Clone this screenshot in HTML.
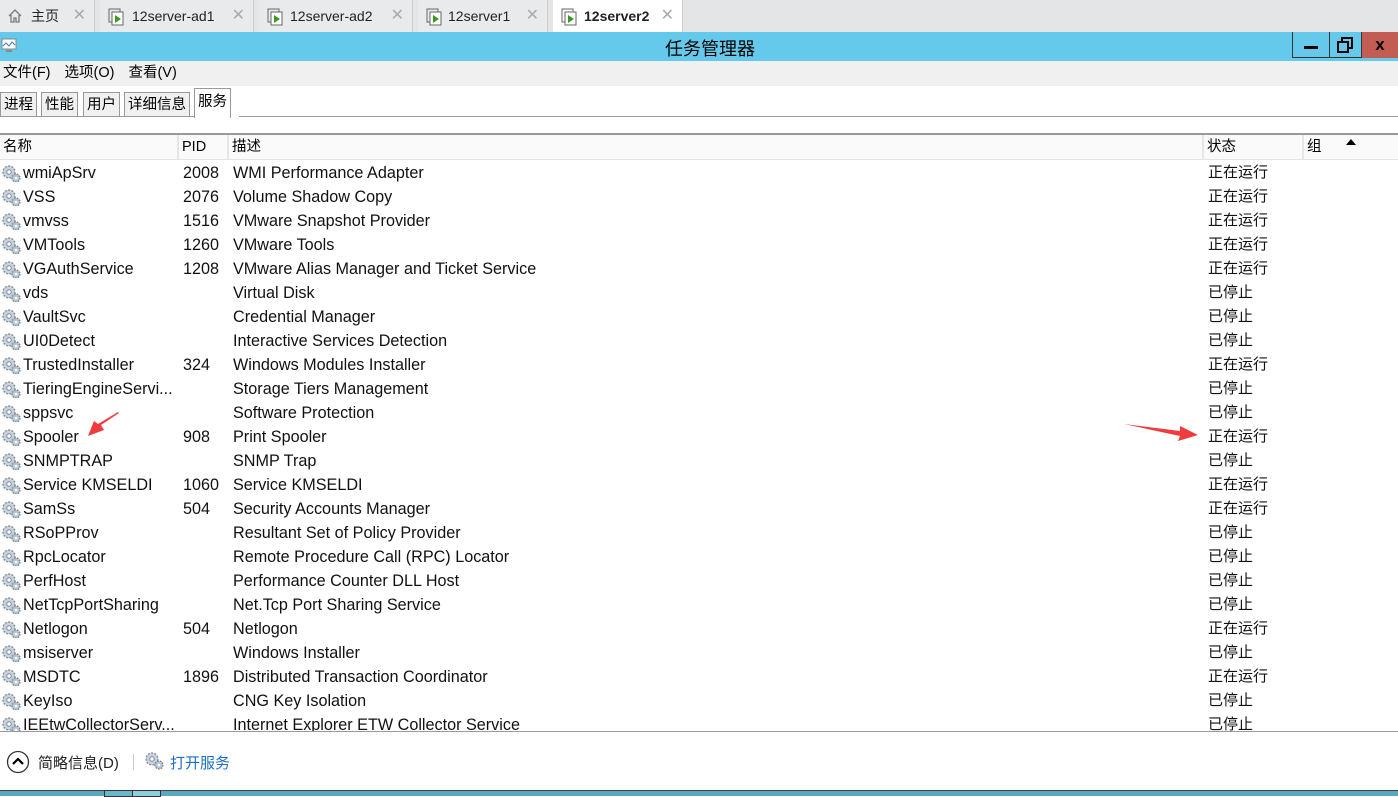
<!DOCTYPE html><html><head><meta charset="utf-8"><style>
body{margin:0;width:1398px;height:795px;overflow:hidden;background:#fff;font-family:"Liberation Sans","Noto Sans CJK SC",sans-serif;position:relative;color:#000}
.abs{position:absolute}
.tabs{left:0;top:0;width:1398px;height:32px;background:#e4e5e7}
.tab{position:absolute;top:0;height:32px;background:#e9eaec;border-right:1px solid #ccc;font-size:14px;line-height:32px;color:#222}
.tab .x{position:absolute;right:8px;top:0;color:#aaa;font-size:16px}
.title{left:0;top:32px;width:1398px;height:29px;background:#64c9ea}
.menu{left:0;top:61px;width:1398px;height:25px;background:#f0f0f0;font-size:14.5px;line-height:25px}
.ttab{position:absolute;top:92px;height:24px;border:1px solid #999;border-bottom:none;background:#f0f0f0;font-size:14.5px;line-height:24px;padding:0 3px}
.row{position:absolute;left:0;width:1398px;height:24px;font-size:16.2px;line-height:24px;color:#111}
.row span{position:absolute;top:1px;white-space:nowrap}
.row span.st{font-size:15px;top:1px}
.g{left:1px;top:4px;width:20px;height:18px}
.hdr{position:absolute;top:135px;height:24px;font-size:14.5px;line-height:24px;background:#fafafa;border-right:2px solid #e6e6e6;padding-left:3px;box-sizing:border-box}
</style></head><body>
<svg width="0" height="0" style="position:absolute"><defs><g id="gear"><circle cx="8" cy="8" r="6" fill="#c7d1dc" stroke="#7d8a99" stroke-width="1.3" stroke-dasharray="2 1.4"/><circle cx="8" cy="8" r="2.2" fill="#fff" stroke="#7d8a99"/><circle cx="15" cy="14" r="4" fill="#b8c6d4" stroke="#6d7b8a" stroke-width="1.2" stroke-dasharray="1.6 1.2"/><circle cx="15" cy="14" r="1.3" fill="#fff"/></g></defs></svg>
<div class="abs tabs">
<div class="tab" style="left:0;width:94px"><svg class="abs" style="left:7px;top:8px" width="16" height="16"><path d="M2 8L8 2 14 8M4 7V14H7V10H9V14H12V7" fill="none" stroke="#777" stroke-width="1.3"/></svg><span style="position:absolute;left:31px">主页</span><span class="x">✕</span></div>
<div class="tab" style="left:100px;width:153px"><svg class="abs" style="left:8px;top:8px" width="18" height="18"><rect x="1" y="1" width="11" height="13" fill="none" stroke="#666"/><rect x="4" y="4" width="11" height="13" fill="#fff" stroke="#666"/><path d="M7 7L13 11 7 15Z" fill="#3a9a1a"/></svg><span style="position:absolute;left:32px">12server-ad1</span><span class="x">✕</span></div>
<div class="tab" style="left:259px;width:153px"><svg class="abs" style="left:8px;top:8px" width="18" height="18"><rect x="1" y="1" width="11" height="13" fill="none" stroke="#666"/><rect x="4" y="4" width="11" height="13" fill="#fff" stroke="#666"/><path d="M7 7L13 11 7 15Z" fill="#3a9a1a"/></svg><span style="position:absolute;left:31px">12server-ad2</span><span class="x">✕</span></div>
<div class="tab" style="left:418px;width:129px"><svg class="abs" style="left:8px;top:8px" width="18" height="18"><rect x="1" y="1" width="11" height="13" fill="none" stroke="#666"/><rect x="4" y="4" width="11" height="13" fill="#fff" stroke="#666"/><path d="M7 7L13 11 7 15Z" fill="#3a9a1a"/></svg><span style="position:absolute;left:30px">12server1</span><span class="x">✕</span></div>
<div class="tab" style="left:553px;width:129px;background:#fff;font-weight:bold"><svg class="abs" style="left:8px;top:8px" width="18" height="18"><rect x="1" y="1" width="11" height="13" fill="none" stroke="#666"/><rect x="4" y="4" width="11" height="13" fill="#fff" stroke="#666"/><path d="M7 7L13 11 7 15Z" fill="#3a9a1a"/></svg><span style="position:absolute;left:31px">12server2</span><span class="x" style="font-weight:normal">✕</span></div>
</div>
<div class="abs title">
<svg class="abs" style="left:1px;top:6px" width="16" height="16"><rect x="1" y="1" width="14" height="10" fill="#fff" stroke="#888"/><path d="M2 8L5 5 8 8 11 4 14 7" fill="none" stroke="#3a7ab8"/><rect x="5" y="12" width="6" height="2" fill="#888"/></svg>
<div class="abs" style="left:0;width:1420px;text-align:center;top:3px;font-size:18px">任务管理器</div>
<div class="abs" style="left:1292px;top:0;width:36px;height:25px;border:1px solid #333;border-top:none"><div class="abs" style="left:11px;top:14px;width:14px;height:3px;background:#000"></div></div>
<div class="abs" style="left:1328px;top:0;width:33px;height:25px;border-bottom:1px solid #333;border-right:1px solid #333"><div class="abs" style="left:13px;top:5px;width:8px;height:8px;border:2px solid #000"></div><div class="abs" style="left:9px;top:9px;width:8px;height:8px;border:2px solid #000;background:#64c9ea"></div></div>
<div class="abs" style="left:1362px;top:0;width:36px;height:26px;background:#c35c52;font-size:17px;font-weight:bold;line-height:26px;text-align:center">x</div>
</div>
<div class="abs menu"><span style="margin-left:3px">文件(F)</span><span style="margin-left:14px">选项(O)</span><span style="margin-left:14px">查看(V)</span></div>
<div class="abs" style="left:0;top:86px;width:1398px;height:31px;background:#fff"></div>
<div class="ttab" style="left:0">进程</div><div class="ttab" style="left:41px">性能</div><div class="ttab" style="left:83px">用户</div><div class="ttab" style="left:124px">详细信息</div>
<div class="ttab" style="left:194px;top:88px;height:29px;background:#fff;line-height:27px">服务</div>
<div class="abs" style="left:0;top:116px;width:194px;height:1px;background:#999"></div>
<div class="abs" style="left:239px;top:116px;width:1159px;height:1px;background:#999"></div>
<div class="abs" style="left:0;top:133px;width:1398px;height:2px;background:#999"></div>
<div class="hdr" style="left:0;width:179px">名称</div>
<div class="hdr" style="left:179px;width:50px">PID</div>
<div class="hdr" style="left:229px;width:975px">描述</div>
<div class="hdr" style="left:1204px;width:100px">状态</div>
<div class="hdr" style="left:1304px;width:94px;border:none">组</div>
<div class="abs" style="left:1346px;top:139px;width:0;height:0;border-left:5px solid transparent;border-right:5px solid transparent;border-bottom:6px solid #000"></div>
<div class="abs" style="left:0;top:159px;width:1398px;height:1px;background:#e3e3e3"></div>
<div id="rows"></div>
<div class="abs" style="left:0;top:731px;width:1398px;height:1px;background:#999"></div>
<div class="abs" style="left:0;top:732px;width:1398px;height:58px;background:#fff"></div>
<svg class="abs" style="left:6px;top:750px" width="24" height="24"><circle cx="12" cy="12" r="10.5" fill="#fff" stroke="#333" stroke-width="1.3"/><path d="M7 14L12 9 17 14" fill="none" stroke="#000" stroke-width="2.2"/></svg>
<div class="abs" style="left:38px;top:752px;font-size:15px;color:#222">简略信息(D)</div>
<div class="abs" style="left:133px;top:754px;width:1px;height:16px;background:#ccc"></div>
<svg class="abs" style="left:144px;top:751px" width="22" height="20"><use href="#gear"/></svg>
<div class="abs" style="left:170px;top:752px;font-size:15px;color:#1e6fc8">打开服务</div>
<div class="abs" style="left:0;top:790px;width:1398px;height:5px;background:#5aa8c0;border-top:1px solid #444"></div>
<div class="abs" style="left:104px;top:790px;width:27px;height:5px;background:#6ab8cc;border:1px solid #333"></div>
<div class="abs" style="left:132px;top:790px;width:27px;height:5px;background:#8fcfdc;border:1px solid #333"></div>
<svg class="abs" style="left:0;top:0" width="1398" height="795"><path d="M119 413L101 425 104 430 88 436 94 421 98 424 118 412Z" fill="#f03c3c"/><path d="M1124 424L1180 431 1180 426 1198 435 1178 441 1180 436Z" fill="#f03c3c"/></svg>
<script>
var d=[["wmiApSrv","2008","WMI Performance Adapter",1],["VSS","2076","Volume Shadow Copy",1],["vmvss","1516","VMware Snapshot Provider",1],["VMTools","1260","VMware Tools",1],["VGAuthService","1208","VMware Alias Manager and Ticket Service",1],["vds","","Virtual Disk",0],["VaultSvc","","Credential Manager",0],["UI0Detect","","Interactive Services Detection",0],["TrustedInstaller","324","Windows Modules Installer",1],["TieringEngineServi...","","Storage Tiers Management",0],["sppsvc","","Software Protection",0],["Spooler","908","Print Spooler",1],["SNMPTRAP","","SNMP Trap",0],["Service KMSELDI","1060","Service KMSELDI",1],["SamSs","504","Security Accounts Manager",1],["RSoPProv","","Resultant Set of Policy Provider",0],["RpcLocator","","Remote Procedure Call (RPC) Locator",0],["PerfHost","","Performance Counter DLL Host",0],["NetTcpPortSharing","","Net.Tcp Port Sharing Service",0],["Netlogon","504","Netlogon",1],["msiserver","","Windows Installer",0],["MSDTC","1896","Distributed Transaction Coordinator",1],["KeyIso","","CNG Key Isolation",0],["IEEtwCollectorServ...","","Internet Explorer ETW Collector Service",0]];
var h="";d.forEach(function(r,i){var t=160+i*24;h+='<div class="row" style="top:'+t+'px"><svg class="abs g" width="20" height="18"><use href="#gear"/></svg><span style="left:23px">'+r[0]+'</span><span style="left:183px">'+r[1]+'</span><span style="left:233px">'+r[2]+'</span><span class="st" style="left:1208px">'+(r[3]?"正在运行":"已停止")+'</span></div>';});
document.getElementById("rows").innerHTML=h;
</script>
</body></html>
